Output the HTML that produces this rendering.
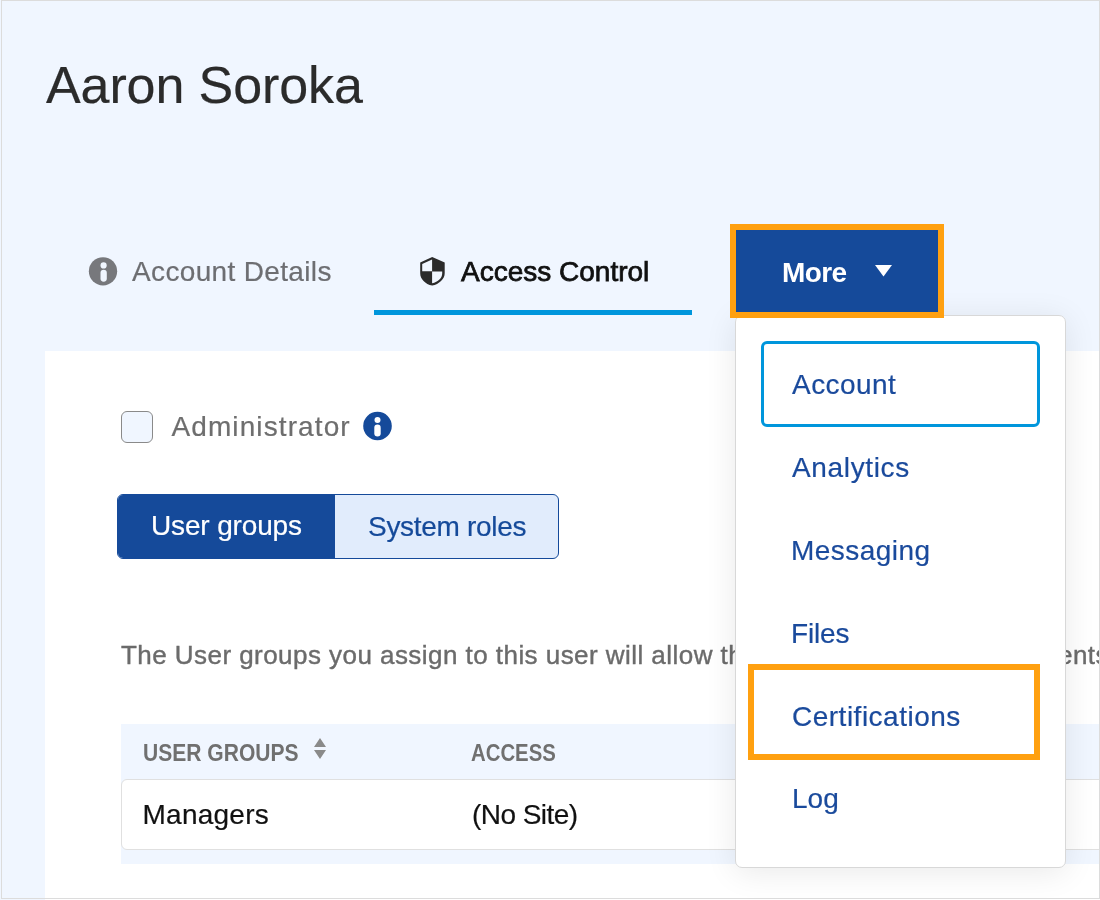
<!DOCTYPE html>
<html>
<head>
<meta charset="utf-8">
<style>
html,body{margin:0;padding:0;width:1100px;height:900px;overflow:hidden;background:#f0f6ff;}
body{position:relative;font-family:"Liberation Sans",sans-serif;}
.frame{position:absolute;left:0;top:0;width:1100px;height:900px;overflow:hidden;will-change:transform;}
.border{position:absolute;left:1px;top:0;width:1097px;height:897px;border:1px solid #dcdcdc;pointer-events:none;}
.t{position:absolute;white-space:nowrap;line-height:40px;height:40px;-webkit-text-stroke:0.2px currentColor;}
.panel{position:absolute;left:45px;top:351px;width:1100px;height:600px;background:#fff;}
</style>
</head>
<body>
<div class="frame">
  <!-- title -->
  <div class="t" id="title" style="left:46px;top:55px;font-size:52px;letter-spacing:-0.1px;line-height:60px;height:60px;color:#2b2b2b;">Aaron Soroka</div>

  <!-- tabs -->
  <svg style="position:absolute;left:88px;top:256px" width="30" height="31" viewBox="0 0 30 31">
    <circle cx="15" cy="15.3" r="14.15" fill="#77787c"/>
    <circle cx="15.6" cy="9.4" r="3.1" fill="#f0f6ff"/>
    <rect x="12.5" y="13.7" width="6.3" height="12" rx="3.15" fill="#f0f6ff"/>
  </svg>
  <div class="t" style="left:132px;top:252px;font-size:28px;letter-spacing:0.35px;color:#6d6e72;">Account Details</div>

  <svg style="position:absolute;left:416px;top:254px" width="32" height="34" viewBox="0 0 32 34">
    <path fill="#2b2b2b" fill-rule="evenodd" d="M16.2 3L4.2 8.4V19.2C4.2 25 9.3 30.2 16.2 31.5C23.1 30.2 28.7 25 28.7 19.2V8.4Z M16.1 5.6L6.2 10V17.3H16.1Z M16.1 17.6H26.2V19.2C26.2 24 22.2 28 16.1 29.2Z"/>
  </svg>
  <div class="t" style="left:461px;top:252px;font-size:28px;color:#111;-webkit-text-stroke:0.75px #111;">Access Control</div>
  <div style="position:absolute;left:374px;top:310px;width:318px;height:5px;background:#0096dc;"></div>

  <!-- white panel -->
  <div class="panel"></div>

  <!-- checkbox -->
  <div style="position:absolute;left:121px;top:411px;width:30px;height:30px;border:1px solid #8a8a8a;border-radius:6px;background:#f0f6ff;"></div>
  <div class="t" style="left:171.5px;top:407px;font-size:28px;letter-spacing:1.1px;color:#6e6e6e;">Administrator</div>
  <svg style="position:absolute;left:363px;top:410.5px" width="30" height="30" viewBox="0 0 30 30">
    <circle cx="14.5" cy="15" r="14.3" fill="#154a9a"/>
    <circle cx="14.5" cy="9" r="3" fill="#fff"/>
    <rect x="11.3" y="13.5" width="6.4" height="12" rx="3.2" fill="#fff"/>
  </svg>

  <!-- segmented -->
  <div style="position:absolute;left:117px;top:494px;width:440px;height:63px;border:1px solid #154a9a;border-radius:6px;background:#e1ecfc;overflow:hidden;">
    <div style="position:absolute;left:0;top:0;width:217px;height:63px;background:#154a9a;"></div>
  </div>
  <div class="t" style="left:151px;top:506px;font-size:28px;letter-spacing:-0.15px;color:#fff;">User groups</div>
  <div class="t" style="left:368px;top:507px;font-size:28px;letter-spacing:-0.3px;color:#154a9a;">System roles</div>

  <!-- description -->
  <div class="t" style="left:121px;top:635px;font-size:26px;letter-spacing:0.45px;color:#6b6b6b;-webkit-text-stroke:0.4px #6b6b6b;">The User groups you assign to this user will allow them to manage the</div>
  <div class="t" style="left:1058px;top:635px;font-size:26px;letter-spacing:0.45px;color:#6b6b6b;-webkit-text-stroke:0.4px #6b6b6b;">ents</div>

  <!-- table -->
  <div style="position:absolute;left:121px;top:724px;width:1000px;height:140px;background:#f0f6ff;"></div>
  <div class="t" style="left:143px;top:733px;font-size:23px;font-weight:700;color:#707070;-webkit-text-stroke:0;transform:scaleX(0.915);transform-origin:0 0;">USER GROUPS</div>
  <svg style="position:absolute;left:313px;top:737px" width="14" height="23" viewBox="0 0 14 23">
    <path d="M1 10L7 1l6 9z M1 13h12l-6 9z" fill="#8a8a8a"/>
  </svg>
  <div class="t" style="left:471px;top:733px;font-size:23px;font-weight:700;color:#707070;-webkit-text-stroke:0;transform:scaleX(0.885);transform-origin:0 0;">ACCESS</div>
  <div style="position:absolute;left:121px;top:779px;width:1000px;height:69px;background:#fff;border:1px solid #e0e0e0;border-radius:6px;"></div>
  <div class="t" style="left:142.5px;top:795px;font-size:28px;letter-spacing:0.25px;color:#111;">Managers</div>
  <div class="t" style="left:472px;top:795px;font-size:28px;letter-spacing:-0.55px;color:#111;">(No Site)</div>

  <!-- More button -->
  <div style="position:absolute;left:735px;top:315px;width:329px;height:551px;background:#fff;border:1px solid #d8d8d8;border-radius:7px;box-shadow:0 4px 32px rgba(0,0,0,0.09);"></div>
  <div style="position:absolute;left:730px;top:224px;width:202px;height:82px;border:6px solid #ffa010;background:#154a9a;"></div>
  <div class="t" style="left:782px;top:253px;font-size:28px;letter-spacing:-0.6px;font-weight:700;-webkit-text-stroke:0;color:#fff;">More</div>
  <svg style="position:absolute;left:873.5px;top:264px" width="19" height="13" viewBox="0 0 19 13"><path d="M1 1h17l-8.5 11.5z" fill="#fff"/></svg>

  <!-- dropdown items -->
  <div style="position:absolute;left:761px;top:341px;width:273px;height:80px;border:3px solid #0096dc;border-radius:6px;"></div>
  <div class="t" style="left:792px;top:365px;font-size:28px;letter-spacing:0.45px;color:#1a4a9c;">Account</div>
  <div class="t" style="left:792px;top:448px;font-size:28px;letter-spacing:0.65px;color:#1a4a9c;">Analytics</div>
  <div class="t" style="left:791px;top:531px;font-size:28px;letter-spacing:0.45px;color:#1a4a9c;">Messaging</div>
  <div class="t" style="left:791px;top:614px;font-size:28px;letter-spacing:-0.15px;color:#1a4a9c;">Files</div>
  <div style="position:absolute;left:748px;top:664px;width:280px;height:84px;border:6px solid #ffa010;"></div>
  <div class="t" style="left:792px;top:697px;font-size:28px;letter-spacing:0.5px;color:#1a4a9c;">Certifications</div>
  <div class="t" style="left:792px;top:779px;font-size:28px;color:#1a4a9c;">Log</div>
</div>
<div class="border"></div>
</body>
</html>
